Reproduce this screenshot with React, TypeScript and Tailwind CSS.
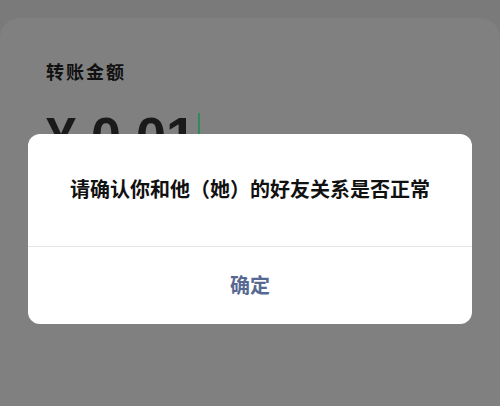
export default function App() {
  return (
    <div
      className="relative w-[500px] h-[406px] overflow-hidden bg-[#7a7a7a]"
      style={{ fontFamily: '"Liberation Sans", "Noto Sans CJK SC", sans-serif' }}
    >
      {/* 背景卡片 */}
      <div className="mt-[18px] h-[420px] rounded-t-[20px] bg-[#808080] pl-[46px] pt-[43px]">
        <div className="text-[18px] leading-[24px] font-bold tracking-[2px] text-[#111]">转账金额</div>
        <div className="mt-[24px] flex items-start">
          <span className="text-[54px] leading-[54px] font-bold text-[#1a1a1a]">¥ 0.01</span>
          <span className="ml-[2px] mt-[4px] w-[2px] h-[50px] bg-[#2f8a5c]" />
        </div>
      </div>

      {/* 弹窗 */}
      <div className="absolute left-[28px] top-[134px] w-[444px] h-[190px] rounded-[12px] bg-white flex flex-col">
        <div className="h-[113px] flex items-center justify-center border-b border-[#e6e6e6]">
          <span className="text-[20px] font-bold text-[#111]">请确认你和他（她）的好友关系是否正常</span>
        </div>
        <div className="flex-1 flex items-center justify-center">
          <span className="text-[20px] font-bold text-[#576892]">确定</span>
        </div>
      </div>
    </div>
  )
}
